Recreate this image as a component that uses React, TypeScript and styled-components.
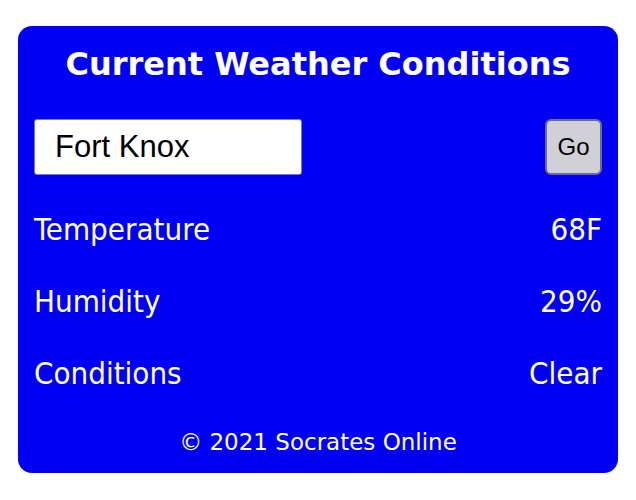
import React from "react";
import styled, { createGlobalStyle } from "styled-components";

const Global = createGlobalStyle`
  html, body { margin: 0; padding: 0; background: #ffffff; }
  body { font-family: "DejaVu Sans Condensed", "DejaVu Sans", sans-serif; }
`;

const Page = styled.div`
  display: flex;
  justify-content: center;
  padding-top: 26px;
`;

const Card = styled.div`
  width: 600px;
  box-sizing: border-box;
  background: #0000f5;
  border-radius: 14px;
  padding: 13px 16px 18px;
  color: #ffffff;
  display: flex;
  flex-direction: column;
`;

const Title = styled.h1`
  margin: 0;
  text-align: center;
  font-family: "DejaVu Sans", sans-serif;
  font-weight: bold;
  font-size: 32px;
  line-height: 50px;
`;

const SearchRow = styled.div`
  display: flex;
  justify-content: space-between;
  align-items: center;
  margin-top: 30px;
  margin-bottom: 18px;
`;

const CityInput = styled.input`
  width: 268px;
  height: 56px;
  box-sizing: border-box;
  border: 1px solid #7a7ab8;
  border-radius: 3px;
  padding: 0 0 0 20px;
  font-family: "Liberation Sans", Arial, sans-serif;
  font-size: 31px;
  color: #000;
  background: #fff;
  outline: none;
`;

const GoButton = styled.button`
  width: 57px;
  height: 56px;
  box-sizing: border-box;
  border: 2px solid #6b6b8e;
  border-radius: 6px;
  background: #d0d0d6;
  font-family: "Liberation Sans", Arial, sans-serif;
  font-size: 24px;
  color: #000;
  padding: 0;
`;

const Row = styled.div`
  display: flex;
  justify-content: space-between;
  align-items: center;
  height: 72px;
  font-size: 31px;
`;

const Footer = styled.div`
  text-align: center;
  font-family: "DejaVu Sans", sans-serif;
  font-size: 23px;
  line-height: 26px;
  margin-top: 20px;
`;

const rows: [string, string][] = [
  ["Temperature", "68F"],
  ["Humidity", "29%"],
  ["Conditions", "Clear"],
];

export default function App() {
  return (
    <>
      <Global />
      <Page>
        <Card>
          <Title>Current Weather Conditions</Title>
          <SearchRow>
            <CityInput defaultValue="Fort Knox" />
            <GoButton>Go</GoButton>
          </SearchRow>
          {rows.map(([label, value]) => (
            <Row key={label}>
              <span>{label}</span>
              <span>{value}</span>
            </Row>
          ))}
          <Footer>© 2021 Socrates Online</Footer>
        </Card>
      </Page>
    </>
  );
}
